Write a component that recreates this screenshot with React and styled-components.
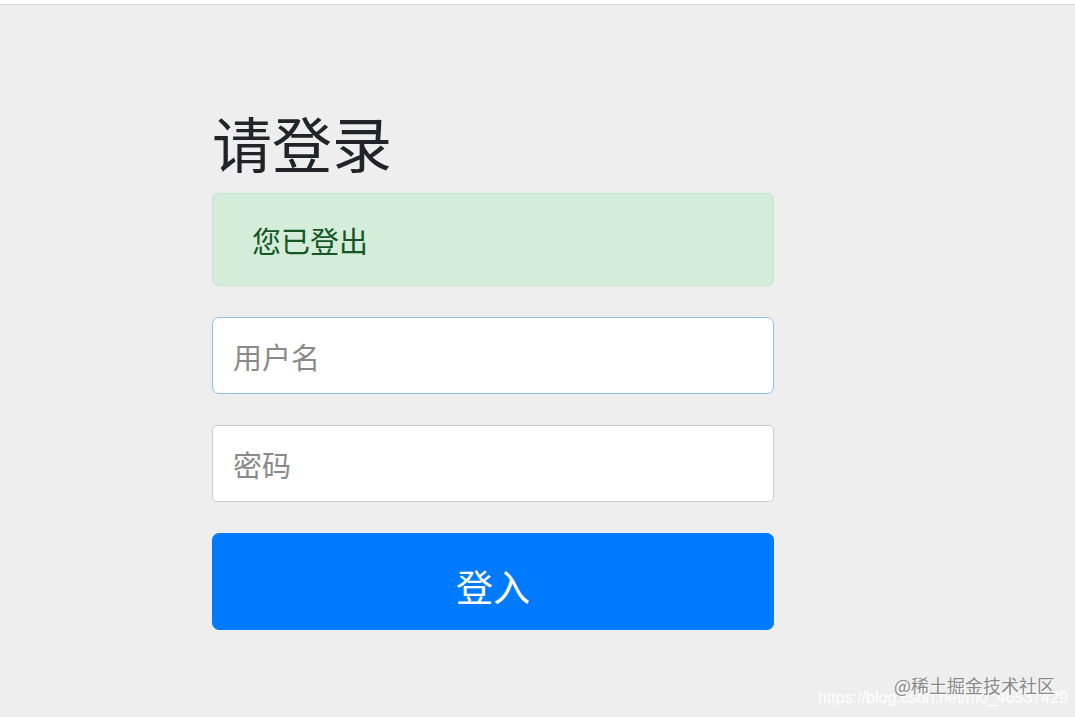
import React from 'react';
import styled, { createGlobalStyle } from 'styled-components';

const GlobalStyle = createGlobalStyle`
  html, body {
    margin: 0;
    padding: 0;
    background: #eeeeee;
  }
  body {
    font-family: "Noto Sans CJK SC", "Noto Sans", "Liberation Sans", sans-serif;
    color: #212529;
  }
  * { box-sizing: border-box; }
`;

const Page = styled.div`
  position: relative;
  min-height: 717px;
  background: #eeeeee;
  overflow: hidden;
`;

const TopStrip = styled.div`
  height: 5px;
  background: #ffffff;
  border-bottom: 1px solid #d9d9d9;
`;

const SignIn = styled.form`
  width: 562px;
  margin-left: 212px;
  padding-top: 101px;
  display: flex;
  flex-direction: column;
`;

const Heading = styled.h2`
  margin: 0 0 15px;
  font-size: 60px;
  font-weight: 400;
  line-height: 72px;
  color: #212529;
`;

const Alert = styled.div`
  height: 93px;
  padding: 0 39px;
  display: flex;
  align-items: center;
  background: #d4edda;
  border: 1px solid #c3e6cb;
  border-radius: 6px;
  color: #155724;
  font-size: 29px;
  margin-bottom: 31px;
`;

const Input = styled.input`
  height: 77px;
  width: 100%;
  padding: 0 20px;
  margin-bottom: 31px;
  font-family: inherit;
  font-size: 29px;
  color: #495057;
  background: #ffffff;
  border: 1px solid ${p => (p.$focused ? '#8fc1ee' : '#cdcdcd')};
  border-radius: ${p => (p.$focused ? '7px' : '5px')};
  outline: none;

  &::placeholder {
    color: #8a8a8a;
  }
`;

const Button = styled.button`
  height: 97px;
  width: 100%;
  padding: 8px 0 0;
  border: 1px solid #007bff;
  border-radius: 7px;
  background: #007bff;
  color: #ffffff;
  font-family: inherit;
  font-size: 37px;
  cursor: pointer;
`;

const Watermark = styled.div`
  position: absolute;
  right: 0;
  bottom: 6px;
  width: 257px;
  height: 40px;
  pointer-events: none;
`;

const WaterUrl = styled.span`
  position: absolute;
  left: 0;
  top: 18px;
  font-family: "Liberation Sans", sans-serif;
  font-size: 16px;
  color: #ffffff;
  white-space: nowrap;
`;

const WaterBrand = styled.span`
  position: absolute;
  right: 20px;
  top: 1px;
  font-size: 18px;
  color: #8a8a8a;
  text-shadow: 1px 1px 0 #ffffff;
  white-space: nowrap;
`;

export default function App() {
  return (
    <Page>
      <GlobalStyle />
      <TopStrip />
      <SignIn onSubmit={e => e.preventDefault()}>
        <Heading>请登录</Heading>
        <Alert>您已登出</Alert>
        <Input $focused type="text" placeholder="用户名" />
        <Input type="password" placeholder="密码" />
        <Button type="submit">登入</Button>
      </SignIn>
      <Watermark>
        <WaterUrl>https://blog.csdn.net/m0_46537429</WaterUrl>
        <WaterBrand>@稀土掘金技术社区</WaterBrand>
      </Watermark>
    </Page>
  );
}
